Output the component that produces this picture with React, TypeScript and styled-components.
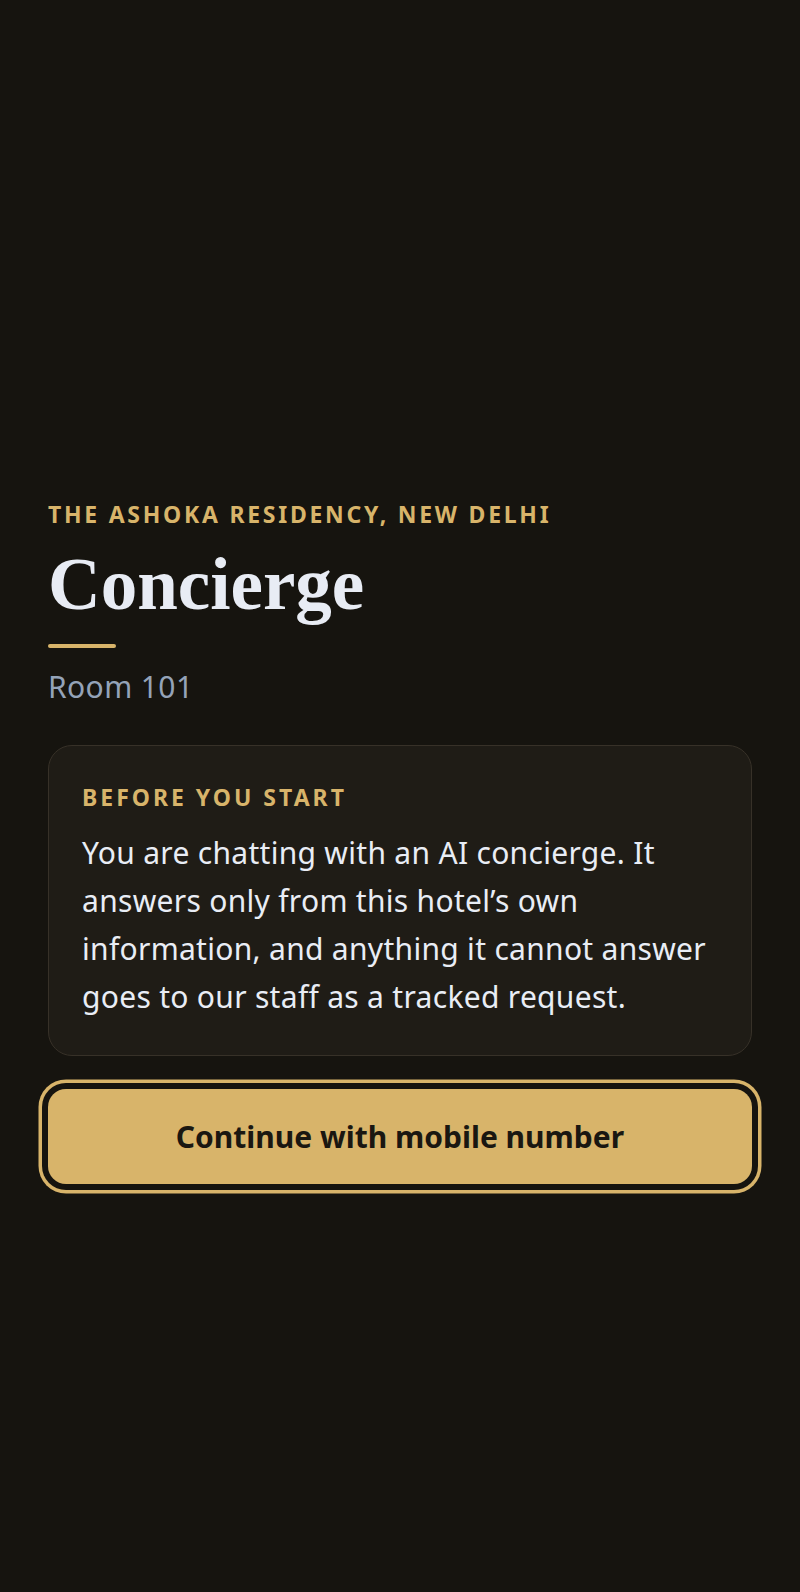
import React from "react";
import styled, { createGlobalStyle } from "styled-components";

const GlobalStyle = createGlobalStyle`
  html, body {
    margin: 0;
    padding: 0;
    background: #16140f;
  }
  body {
    font-family: "Noto Sans", "Open Sans", sans-serif;
    -webkit-font-smoothing: antialiased;
  }
  * { box-sizing: border-box; }
`;

const Page = styled.main`
  min-height: 100vh;
  background: #16140f;
  padding: 498px 48px 48px;
  display: flex;
  flex-direction: column;
`;

const Eyebrow = styled.p<{ $tracking?: string }>`
  margin: 0;
  font-family: "Noto Sans", sans-serif;
  font-weight: 700;
  font-size: 23px;
  line-height: 32px;
  letter-spacing: ${(p) => p.$tracking ?? "0.119em"};
  text-transform: uppercase;
  color: #d8b46a;
`;

const Title = styled.h1`
  margin: 15px 0 0;
  font-family: "Liberation Serif", "Times New Roman", serif;
  font-weight: 700;
  font-size: 73px;
  line-height: 80px;
  color: #e8ecf4;
`;

const Rule = styled.div`
  margin-top: 19px;
  width: 68px;
  height: 4px;
  border-radius: 2px;
  background: #d8b46a;
`;

const Room = styled.p`
  margin: 19px 0 0;
  font-family: "Noto Sans", sans-serif;
  font-size: 30px;
  line-height: 40px;
  letter-spacing: 0.4px;
  color: #94a3b8;
`;

const Card = styled.section`
  margin-top: 38px;
  background: #1f1c16;
  border: 1px solid #373128;
  border-radius: 24px;
  padding: 35px 33px 34px;
`;

const CardText = styled.p`
  margin: 16px 0 0;
  font-family: "Noto Sans", sans-serif;
  font-size: 30px;
  line-height: 48px;
  letter-spacing: 0.3px;
  color: #e9edf5;
`;

const PrimaryButton = styled.button`
  margin-top: 33px;
  height: 95px;
  width: 100%;
  border: none;
  border-radius: 18px;
  background: #d8b46a;
  color: #1a1711;
  font-family: "Noto Sans", sans-serif;
  font-weight: 700;
  font-size: 30px;
  cursor: pointer;
  box-shadow: 0 0 0 6px #16140f, 0 0 0 9.5px #d8b46a;
`;

export default function App() {
  return (
    <>
      <GlobalStyle />
      <Page>
        <Eyebrow>The Ashoka Residency, New Delhi</Eyebrow>
        <Title>Concierge</Title>
        <Rule />
        <Room>Room 101</Room>
        <Card>
          <Eyebrow $tracking="0.13em">Before you start</Eyebrow>
          <CardText>
            You are chatting with an AI concierge. It answers only from this
            hotel’s own information, and anything it cannot answer goes to our
            staff as a tracked request.
          </CardText>
        </Card>
        <PrimaryButton type="button">Continue with mobile number</PrimaryButton>
      </Page>
    </>
  );
}
